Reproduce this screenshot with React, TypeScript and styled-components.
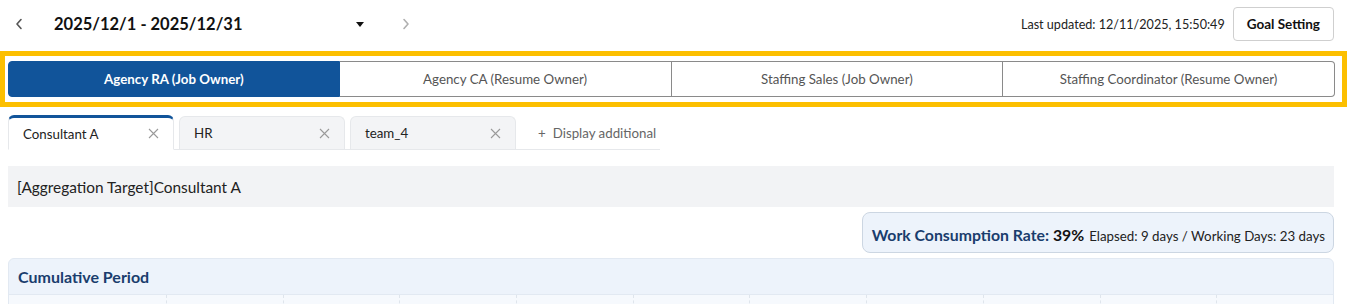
import styled, { createGlobalStyle } from "styled-components";

const GlobalStyle = createGlobalStyle`
  body {
    margin: 0;
    font-family: Lato, "Noto Sans", sans-serif;
    background: #ffffff;
    color: #222;
  }
`;

const Page = styled.div`
  width: 1347px;
  display: flex;
  flex-direction: column;
`;

const TopBar = styled.div`
  display: flex;
  align-items: center;
  justify-content: space-between;
  height: 48px;
  padding: 0 13px 0 8px;
`;

const PeriodNav = styled.div`
  display: flex;
  align-items: center;
`;

const NavButton = styled.button<{ $muted?: boolean }>`
  border: none;
  background: none;
  width: 22px;
  height: 30px;
  padding: 0;
  display: flex;
  align-items: center;
  justify-content: center;
  color: ${(p) => (p.$muted ? "#b0b0b0" : "#555")};
  cursor: pointer;
`;

const PeriodSelect = styled.div`
  display: flex;
  align-items: center;
  justify-content: space-between;
  width: 310px;
  margin: 0 31px 0 24px;
`;

const PeriodText = styled.span`
  font-size: 16.5px;
  font-weight: 700;
  color: #111;
`;

const Caret = styled.span`
  width: 0;
  height: 0;
  border-left: 4px solid transparent;
  border-right: 4px solid transparent;
  border-top: 5px solid #111;
`;

const RightTools = styled.div`
  display: flex;
  align-items: center;
  gap: 8px;
`;

const Updated = styled.span`
  font-size: 12.6px;
  color: #222;
`;

const GoalButton = styled.button`
  height: 34px;
  padding: 0 13px;
  background: #fff;
  border: 1px solid #cfcfcf;
  border-radius: 4px;
  font-family: inherit;
  font-size: 13.5px;
  font-weight: 700;
  color: #111;
`;

const Highlight = styled.div`
  margin-top: 3px;
  border: 5px solid #fcbf00;
  padding: 5px 7px 5px 3px;
`;

const Segments = styled.div`
  display: grid;
  grid-template-columns: repeat(4, 1fr);
  height: 36px;
`;

const Segment = styled.button<{ $active?: boolean }>`
  font-family: inherit;
  font-size: 13.3px;
  font-weight: ${(p) => (p.$active ? 700 : 400)};
  color: ${(p) => (p.$active ? "#fff" : "#555")};
  background: ${(p) => (p.$active ? "#11549a" : "#fff")};
  border: 1px solid ${(p) => (p.$active ? "#11549a" : "#8a8a8a")};
  border-left-width: ${(p) => (p.$active ? "1px" : "0")};
  padding: 0;
  &:first-child {
    border-radius: 4px 0 0 4px;
  }
  &:last-child {
    border-radius: 0 4px 4px 0;
  }
`;

const TabStrip = styled.div`
  display: flex;
  align-items: flex-end;
  gap: 5px;
  margin: 8px 0 0 8px;
  width: 652px;
  border-bottom: 1px solid #e6e8eb;
  height: 34px;
`;

const Tab = styled.div<{ $active?: boolean }>`
  width: 166px;
  height: ${(p) => (p.$active ? "35px" : "33px")};
  display: flex;
  align-items: center;
  justify-content: space-between;
  padding: 0 14px;
  box-sizing: border-box;
  font-size: 13.3px;
  color: #222;
  background: ${(p) => (p.$active ? "#fff" : "#f3f4f6")};
  border: 1px solid #e6e8eb;
  border-top: ${(p) => (p.$active ? "3px solid #11549a" : "1px solid #e6e8eb")};
  border-bottom: ${(p) => (p.$active ? "1px solid #fff" : "none")};
  border-radius: 6px 6px 0 0;
  margin-bottom: ${(p) => (p.$active ? "-1px" : "0")};
`;

const Close = styled.span`
  display: flex;
  color: #9a9a9a;
`;

const AddTab = styled.div`
  display: flex;
  align-items: center;
  gap: 7px;
  height: 33px;
  padding-left: 17px;
  font-size: 13.3px;
  color: #666;
`;

const Target = styled.div`
  margin: 16px 13px 0 8px;
  height: 41px;
  display: flex;
  align-items: center;
  padding-left: 9px;
  background: #f2f3f5;
  font-size: 15.4px;
  color: #222;
`;

const RateRow = styled.div`
  display: flex;
  justify-content: flex-end;
  padding: 5px 13px 0 8px;
`;

const RatePill = styled.div`
  display: flex;
  align-items: baseline;
  gap: 5px;
  height: 41px;
  box-sizing: border-box;
  padding: 12px 8px 0 9px;
  background: #edf3fb;
  border: 1px solid #ccd6e2;
  border-radius: 8px;
`;

const RateLabel = styled.span`
  font-size: 15.8px;
  font-weight: 700;
  color: #1a3d6d;
`;

const RateValue = styled.span`
  color: #111;
`;

const RateNote = styled.span`
  font-size: 13.3px;
  color: #222;
`;

const Panel = styled.div`
  margin: 5px 13px 0 8px;
  background: #edf3fb;
  border: 1px solid #e2e9f2;
  border-radius: 6px 6px 0 0;
`;

const PanelTitle = styled.div`
  height: 35px;
  display: flex;
  align-items: center;
  padding-left: 9px;
  font-size: 16px;
  font-weight: 700;
  color: #1a3d6d;
  border-bottom: 1px solid #e2e9f2;
`;

const Columns = styled.div`
  display: grid;
  grid-template-columns: 157px repeat(10, 1fr);
  height: 30px;
  background: #f6f9fd;
`;

const Column = styled.div`
  border-left: 1px dashed #dfe5ec;
  &:first-child {
    border-left: none;
  }
`;

const Chevron = ({ dir }: { dir: "left" | "right" }) => (
  <svg width="8" height="12" viewBox="0 0 8 12" fill="none">
    <path
      d={dir === "left" ? "M6 1.5 L2 6 L6 10.5" : "M2 1.5 L6 6 L2 10.5"}
      stroke="currentColor"
      strokeWidth="1.6"
      strokeLinecap="round"
      strokeLinejoin="round"
    />
  </svg>
);

const CloseIcon = () => (
  <svg width="11" height="11" viewBox="0 0 11 11" fill="none">
    <path d="M1 1 L10 10 M10 1 L1 10" stroke="currentColor" strokeWidth="1.1" />
  </svg>
);

const segments = [
  "Agency RA (Job Owner)",
  "Agency CA (Resume Owner)",
  "Staffing Sales (Job Owner)",
  "Staffing Coordinator (Resume Owner)",
];

const tabs = ["Consultant A", "HR", "team_4"];

const App = () => {
  return (
    <Page>
      <GlobalStyle />
      <TopBar>
        <PeriodNav>
          <NavButton>
            <Chevron dir="left" />
          </NavButton>
          <PeriodSelect>
            <PeriodText>2025/12/1 - 2025/12/31</PeriodText>
            <Caret />
          </PeriodSelect>
          <NavButton $muted>
            <Chevron dir="right" />
          </NavButton>
        </PeriodNav>
        <RightTools>
          <Updated>Last updated: 12/11/2025, 15:50:49</Updated>
          <GoalButton>Goal Setting</GoalButton>
        </RightTools>
      </TopBar>

      <Highlight>
        <Segments>
          {segments.map((s, i) => (
            <Segment key={s} $active={i === 0}>
              {s}
            </Segment>
          ))}
        </Segments>
      </Highlight>

      <TabStrip>
        {tabs.map((t, i) => (
          <Tab key={t} $active={i === 0}>
            <span>{t}</span>
            <Close>
              <CloseIcon />
            </Close>
          </Tab>
        ))}
        <AddTab>
          <span>+</span>
          <span>Display additional</span>
        </AddTab>
      </TabStrip>

      <Target>[Aggregation Target]Consultant A</Target>

      <RateRow>
        <RatePill>
          <RateLabel>
            Work Consumption Rate: <RateValue>39%</RateValue>
          </RateLabel>
          <RateNote>Elapsed: 9 days / Working Days: 23 days</RateNote>
        </RatePill>
      </RateRow>

      <Panel>
        <PanelTitle>Cumulative Period</PanelTitle>
        <Columns>
          {Array.from({ length: 11 }).map((_, i) => (
            <Column key={i} />
          ))}
        </Columns>
      </Panel>
    </Page>
  );
};

export default App;
